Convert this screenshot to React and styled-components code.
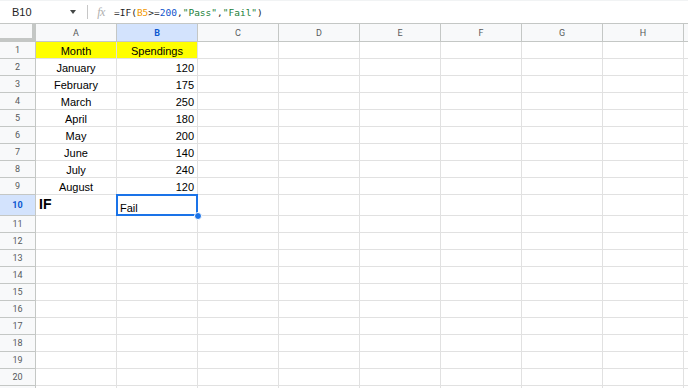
import React from "react";
import styled, { createGlobalStyle } from "styled-components";

const Global = createGlobalStyle`
  html, body { margin: 0; padding: 0; background: #fff; overflow: hidden; }
  body { font-family: "Liberation Sans", Arial, sans-serif; }
`;

const COLS = ["A", "B", "C", "D", "E", "F", "G", "H", "I"];

const data = [
  ["Month", "Spendings"],
  ["January", 120],
  ["February", 175],
  ["March", 250],
  ["April", 180],
  ["May", 200],
  ["June", 140],
  ["July", 240],
  ["August", 120],
];

const Page = styled.div`
  width: 688px;
  height: 388px;
  overflow: hidden;
`;

const FormulaBar = styled.div`
  height: 23px;
  display: flex;
  align-items: center;
  border-top: 1px solid #f1f3f4;
  box-sizing: border-box;
`;

const NameBox = styled.div`
  width: 87px;
  display: flex;
  align-items: center;
  justify-content: space-between;
  padding: 0 11px 0 12px;
  box-sizing: border-box;
  font-size: 11px;
  color: #1f1f1f;
`;

const Caret = styled.span`
  width: 0;
  height: 0;
  border-left: 3.5px solid transparent;
  border-right: 3.5px solid transparent;
  border-top: 4px solid #444746;
`;

const Sep = styled.div`
  width: 1px;
  height: 14px;
  background: #c7c7c7;
`;

const Fx = styled.span`
  width: 26px;
  text-align: center;
  font-family: "Liberation Serif", serif;
  font-style: italic;
  font-size: 12px;
  color: #b0b0b0;
  letter-spacing: -0.5px;
`;

const Formula = styled.div`
  font-family: "DejaVu Sans Mono", monospace;
  font-size: 9.5px;
  color: #1f1f1f;
  white-space: pre;
`;

const Tok = styled.span`
  color: ${(p) => p.$c};
`;

const Grid = styled.div`
  display: grid;
  grid-template-columns: 36px repeat(9, 81px);
`;

const Corner = styled.div`
  height: 19px;
  box-sizing: border-box;
  background: #f8f9fa;
  border-right: 4px solid #c4c7c5;
  border-bottom: 4px solid #c4c7c5;
  border-top: 1px solid #c4c7c5;
  width: 36px;
`;

const ColHead = styled.div`
  height: 19px;
  box-sizing: border-box;
  background: ${(p) => (p.$sel ? "#d3e3fd" : "#f8f9fa")};
  border-top: 1px solid #c4c7c5;
  border-right: 1px solid #c4c7c5;
  border-bottom: 1px solid #c4c7c5;
  display: flex;
  align-items: center;
  justify-content: center;
  font-size: 9px;
  color: ${(p) => (p.$sel ? "#0b57d0" : "#575a5c")};
  font-weight: ${(p) => (p.$sel ? 700 : 400)};
  font-family: "Roboto", "Liberation Sans", sans-serif;
`;

const RowHead = styled.div`
  height: ${(p) => p.$h}px;
  box-sizing: border-box;
  background: ${(p) => (p.$sel ? "#d3e3fd" : "#f8f9fa")};
  border-right: 1px solid #c4c7c5;
  border-bottom: 1px solid #c4c7c5;
  display: flex;
  align-items: center;
  justify-content: center;
  font-size: 9px;
  color: ${(p) => (p.$sel ? "#0b57d0" : "#575a5c")};
  font-weight: ${(p) => (p.$sel ? 700 : 400)};
  font-family: "Roboto", "Liberation Sans", sans-serif;
`;

const Cell = styled.div`
  position: relative;
  z-index: ${(p) => (p.$active ? 2 : "auto")};
  height: ${(p) => p.$h}px;
  box-sizing: border-box;
  border-right: 1px solid #e1e1e1;
  border-bottom: 1px solid #e1e1e1;
  background: ${(p) => p.$bg || "#fff"};
  display: flex;
  align-items: flex-end;
  justify-content: ${(p) => p.$align || "flex-start"};
  padding: 0 3px 1px 3px;
  font-size: ${(p) => (p.$big ? "14px" : "11px")};
  font-weight: ${(p) => (p.$big ? 700 : 400)};
  color: #000;
  white-space: nowrap;
`;

const BigText = styled.span`
  margin-bottom: 2px;
`;

const Selection = styled.div`
  position: absolute;
  left: -1px;
  top: -1px;
  right: -1px;
  bottom: -1px;
  border: 2px solid #1a73e8;
  pointer-events: none;
`;

const Handle = styled.div`
  position: absolute;
  right: -5px;
  bottom: -5px;
  width: 8px;
  height: 8px;
  border-radius: 50%;
  background: #1a73e8;
  border: 1px solid #fff;
  box-sizing: border-box;
`;

function cellFor(r, c) {
  const h = r === 10 ? 21 : 17;
  if (r === 1 && c < 2) {
    return (
      <Cell key={c} $h={h} $bg="#ffff00" $align="center">
        {data[0][c]}
      </Cell>
    );
  }
  if (r >= 2 && r <= 9 && c === 0) {
    return (
      <Cell key={c} $h={h} $align="center">
        {data[r - 1][0]}
      </Cell>
    );
  }
  if (r >= 2 && r <= 9 && c === 1) {
    return (
      <Cell key={c} $h={h} $align="flex-end">
        {data[r - 1][1]}
      </Cell>
    );
  }
  if (r === 10 && c === 0) {
    return (
      <Cell key={c} $h={h} $big>
        <BigText>IF</BigText>
      </Cell>
    );
  }
  if (r === 10 && c === 1) {
    return (
      <Cell key={c} $h={h} $active>
        Fail
        <Selection />
        <Handle />
      </Cell>
    );
  }
  return <Cell key={c} $h={h} />;
}

export default function App() {
  const rows = Array.from({ length: 21 }, (_, i) => i + 1);
  return (
    <Page>
      <Global />
      <FormulaBar>
        <NameBox>
          <span>B10</span>
          <Caret />
        </NameBox>
        <Sep />
        <Fx>fx</Fx>
        <Formula>
          =IF(<Tok $c="#f29900">B5</Tok>&gt;=<Tok $c="#1155cc">200</Tok>,
          <Tok $c="#188038">"Pass"</Tok>,<Tok $c="#188038">"Fail"</Tok>)
        </Formula>
      </FormulaBar>
      <Grid>
        <Corner />
        {COLS.map((c) => (
          <ColHead key={c} $sel={c === "B"}>
            {c}
          </ColHead>
        ))}
        {rows.map((r) => (
          <React.Fragment key={r}>
            <RowHead $h={r === 10 ? 21 : 17} $sel={r === 10}>
              {r}
            </RowHead>
            {COLS.map((_, c) => cellFor(r, c))}
          </React.Fragment>
        ))}
      </Grid>
    </Page>
  );
}
